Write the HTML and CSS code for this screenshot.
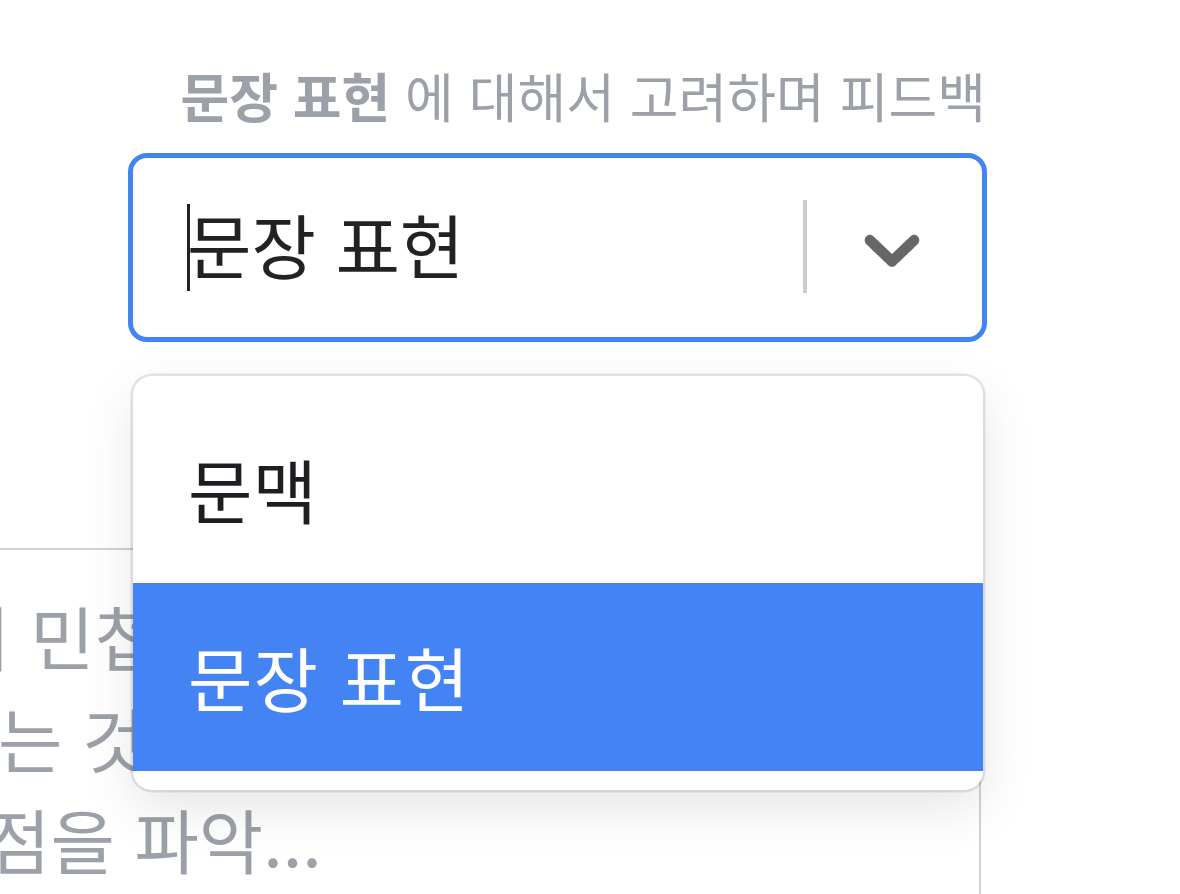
FILE: index.html
```html
<!DOCTYPE html>
<html lang="ko">
<head>
<meta charset="utf-8">
<title>피드백 기준 선택</title>
<link rel="stylesheet" href="styles.css">
</head>
<body>
<div class="page">
  <div class="field">
    <label class="label"><strong>문장 표현</strong> 에 대해서 고려하며 피드백</label>
    <div class="select">
      <div class="control">
        <div class="value"><span class="caret"></span><span class="value-text">문장 표현</span></div>
        <span class="separator"></span>
        <div class="indicator">
          <svg viewBox="0 0 20 20" width="94" height="94" aria-hidden="true"><path d="M4.516 7.548c0.436-0.446 1.043-0.481 1.576 0l3.908 3.747 3.908-3.747c0.533-0.481 1.141-0.446 1.574 0 0.436 0.445 0.408 1.197 0 1.615-0.406 0.418-4.695 4.502-4.695 4.502-0.217 0.223-0.502 0.335-0.787 0.335s-0.57-0.112-0.789-0.335c0 0-4.287-4.084-4.695-4.502s-0.436-1.170 0-1.615z"/></svg>
        </div>
      </div>
      <div class="menu">
        <div class="option">문맥</div>
        <div class="option selected">문장 표현</div>
      </div>
    </div>
  </div>
  <div class="textarea">
    <div class="ph ph1">이 민첩성</div>
    <div class="ph ph2">는 것을</div>
    <div class="ph ph3">점을 파악...</div>
  </div>
</div>
</body>
</html>
```
FILE: styles.css
```css
html, body {
  margin: 0;
  padding: 0;
  background: #ffffff;
}
body {
  width: 1180px;
  height: 894px;
  overflow: hidden;
  font-family: "Noto Sans CJK KR", "Noto Sans", sans-serif;
}
.page {
  padding: 59px 0 0 128px;
}
.field {
  width: 859px;
}
.label {
  display: block;
  font-size: 53px;
  line-height: 72px;
  color: #9ca1a9;
  text-align: right;
  padding-right: 1px;
  margin-bottom: 22px;
  white-space: nowrap;
}
.label strong {
  font-weight: 700;
}
.select {
  position: relative;
}
.control {
  box-sizing: border-box;
  height: 189px;
  border: 5px solid #4483f4;
  border-radius: 19px;
  display: flex;
  align-items: center;
  background: #fff;
}
.value {
  flex: 1;
  display: flex;
  align-items: center;
  padding-left: 54px;
}
.caret {
  display: inline-block;
  width: 3px;
  height: 87px;
  background: #222;
}
.value-text {
  font-size: 70px;
  color: #222;
  margin-left: -3px;
  line-height: 100px;
  margin-top: -8px;
}
.separator {
  width: 4px;
  height: 93px;
  background: #cccccc;
  margin-top: -2px;
}
.indicator {
  display: flex;
  align-items: center;
  padding: 0 43px 0 38px;
}
.indicator svg {
  display: block;
  fill: #666666;
}
.menu {
  position: absolute;
  top: 223px;
  left: 5px;
  right: 4px;
  box-sizing: border-box;
  padding: 19px 0;
  background: #fff;
  border-radius: 19px;
  box-shadow: 0 0 0 2.5px rgba(0, 0, 0, 0.1), 0 19px 52px rgba(0, 0, 0, 0.1);
  z-index: 2;
}
.option {
  height: 188px;
  display: flex;
  align-items: center;
  padding-left: 55px;
  font-size: 70px;
  line-height: 100px;
  color: #1e1e22;
}
.option.selected {
  background: #4483f4;
  color: #ffffff;
  letter-spacing: 1px;
}
.textarea {
  box-sizing: border-box;
  margin-top: 206px;
  margin-left: -428px;
  width: 1281px;
  height: 400px;
  border-top: 2.5px solid #cbd3dd;
  border-right: 2.5px solid #cbd3dd;
  border-top-right-radius: 19px;
  padding-top: 35px;
}
.ph {
  font-size: 70px;
  line-height: 101.5px;
  color: #9ca1a9;
  white-space: nowrap;
}
.ph1 { margin-left: 246px; }
.ph2 { margin-left: 298px; }
.ph3 { margin-left: 286px; }
```
